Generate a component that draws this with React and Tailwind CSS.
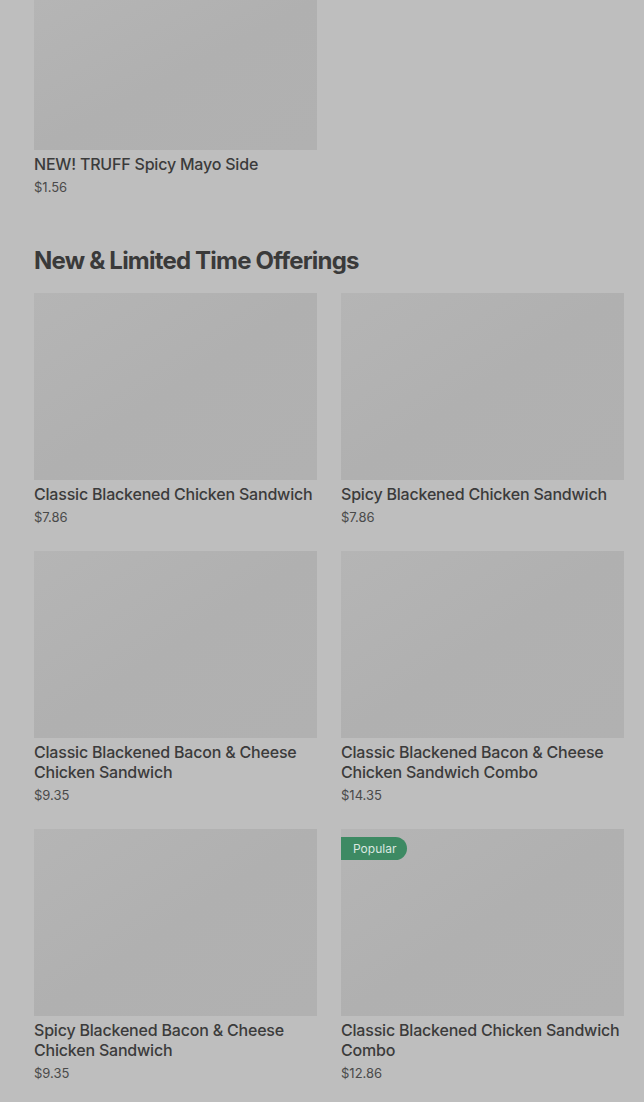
import React from "react";

const items = [
  { t: "Classic Blackened Chicken Sandwich", p: "$7.86" },
  { t: "Spicy Blackened Chicken Sandwich", p: "$7.86" },
  { t: "Classic Blackened Bacon & Cheese Chicken Sandwich", p: "$9.35" },
  { t: "Classic Blackened Bacon & Cheese Chicken Sandwich Combo", p: "$14.35" },
  { t: "Spicy Blackened Bacon & Cheese Chicken Sandwich", p: "$9.35" },
  { t: "Classic Blackened Chicken Sandwich Combo", p: "$12.86", badge: "Popular" },
];

function Img({ h = "h-[187px]", badge }) {
  return (
    <div className={`relative ${h} w-full bg-gradient-to-br from-[#b5b5b5] via-[#b0b0b0] to-[#b1b1b1]`}>
      {badge && (
        <div className="absolute left-0 top-2 h-[23px] pl-3 pr-[11px] flex items-center rounded-r-full bg-[#3d8a63] text-[12px] text-[#dbe8e0] font-['Inter',sans-serif]">
          {badge}
        </div>
      )}
    </div>
  );
}

function Card({ t, p, badge, h }) {
  return (
    <div className="flex flex-col">
      <Img h={h} badge={badge} />
      <div className="mt-1 text-[16px] leading-5 font-medium text-[#3b3b3b] font-['Inter',sans-serif] tracking-[-0.2px]">{t}</div>
      <div className="mt-[3px] text-[13px] leading-5 text-[#4a4a4a] font-['Inter',sans-serif]">{p}</div>
    </div>
  );
}

export default function App() {
  return (
    <div className="min-h-[1102px] w-full bg-[#bebebe] pl-[34px] pr-[20px]">
      <div className="grid grid-cols-2 gap-x-6">
        <Card t="NEW! TRUFF Spicy Mayo Side" p="$1.56" h="h-[150px]" />
      </div>
      <h2 className="mt-[48px] mb-4 text-[24px] leading-8 font-bold text-[#3a3a3a] font-['Inter',sans-serif] tracking-[-0.8px]">
        New &amp; Limited Time Offerings
      </h2>
      <div className="grid grid-cols-2 gap-x-6 gap-y-6">
        {items.map((it, i) => (
          <Card key={i} {...it} />
        ))}
      </div>
    </div>
  );
}
